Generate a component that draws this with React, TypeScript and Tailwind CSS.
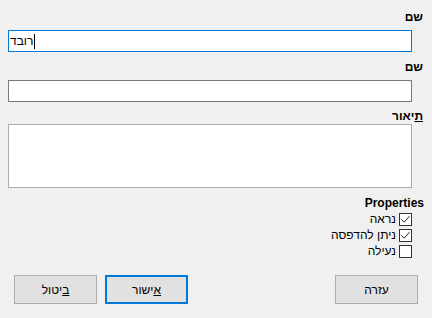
import React from "react";

const FONT = "font-['Liberation_Sans','DejaVu_Sans',sans-serif]";

function Label({ children, className = "" }: { children: React.ReactNode; className?: string }) {
  return <div className={`mr-[9px] h-4 text-[12px] font-bold leading-4 text-black ${className}`}>{children}</div>;
}

function Check({ checked, label }: { checked: boolean; label: string }) {
  return (
    <div className="mr-[20px] flex h-4 items-center gap-[3px]">
      <span className="flex h-[13px] w-[13px] items-center justify-center border border-[#333333] bg-white">
        {checked && (
          <svg width="11" height="11" viewBox="0 0 11 11">
            <path d="M1.5 5.5 L4.2 8.2 L9.5 2.2" fill="none" stroke="#222" strokeWidth="1" />
          </svg>
        )}
      </span>
      <span className="text-[12px] leading-4 text-black">{label}</span>
    </div>
  );
}

function Btn({ children, primary = false }: { children: React.ReactNode; primary?: boolean }) {
  return (
    <button
      className={`flex h-[29px] w-[83px] items-center justify-center bg-[#e1e1e1] text-[12px] text-black ${
        primary ? "border-2 border-[#0078d7]" : "border border-[#adadad]"
      }`}
    >
      {children}
    </button>
  );
}

export default function App() {
  return (
    <div dir="rtl" className={`flex h-[318px] w-[432px] flex-col bg-[#f0f0f0] ${FONT}`}>
      <Label className="mt-[9px]">שם</Label>
      <div
        dir="ltr"
        className="mt-[5px] ml-[8px] mr-[20px] flex h-[22px] items-center border border-[#0078d7] bg-white pl-[1px] text-[12px] text-black"
      >
        <span>רובד</span>
        <span className="ml-[1px] h-[15px] w-px bg-black" />
      </div>

      <Label className="mt-[7px]">שם</Label>
      <div className="mt-[5px] ml-[8px] mr-[20px] h-[22px] border border-[#7a7a7a] bg-white" />

      <Label className="mt-[6px]">
        <span className="underline">ת</span>יאור
      </Label>
      <div className="ml-[8px] mr-[20px] h-[64px] border border-[#ababab] bg-white" />

      <div className="mt-[8px] mr-[8px] h-[15px] text-[12px] font-bold leading-[15px] text-black">Properties</div>
      <div className="flex flex-col">
        <Check checked label="נראה" />
        <Check checked label="ניתן להדפסה" />
        <Check checked={false} label="נעילה" />
      </div>

      <div className="mt-[16px] mr-[14px] ml-[14px] flex items-center">
        <Btn>עזרה</Btn>
        <div className="flex-1" />
        <div className="flex items-center gap-[8px]">
          <Btn primary>
            <span>
              <span className="underline">א</span>ישור
            </span>
          </Btn>
          <Btn>
            <span>
              <span className="underline">ב</span>יטול
            </span>
          </Btn>
        </div>
      </div>
    </div>
  );
}
